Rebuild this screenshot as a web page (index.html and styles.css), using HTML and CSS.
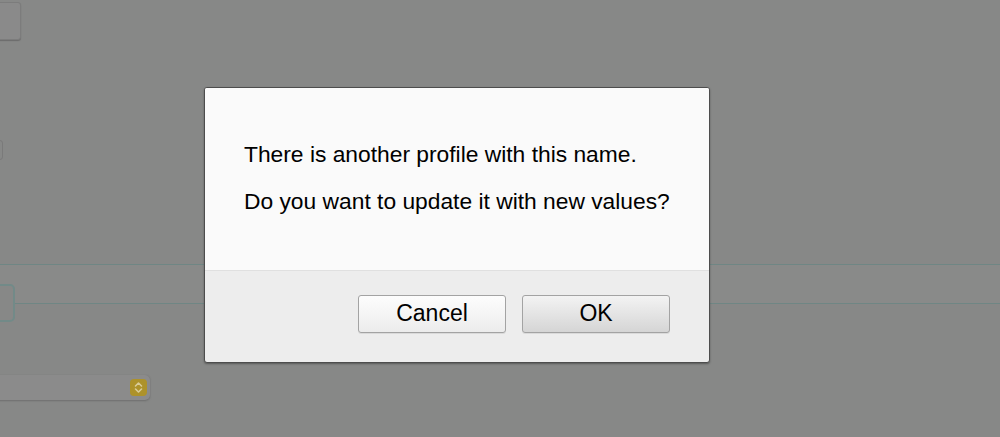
FILE: index.html
```html
<!DOCTYPE html>
<html lang="en">
<head>
<meta charset="utf-8">
<title>Profile</title>
<link rel="stylesheet" href="styles.css">
</head>
<body>
<div class="page">
  <div class="top-btn"></div>
  <div class="edge-mark"></div>
  <div class="band">
    <div class="field"></div>
  </div>
  <div class="select">
    <span class="stepper">
      <svg width="17" height="17" viewBox="0 0 17 17"><path d="M5.5 7 L8.5 4 L11.5 7 M5.5 10 L8.5 13 L11.5 10" fill="none" stroke="#d9cc98" stroke-width="1.6" stroke-linecap="round" stroke-linejoin="round"/></svg>
    </span>
  </div>
</div>

<div class="dialog">
  <div class="dialog-body">
    <p class="msg">There is another profile with this name.</p>
    <p class="msg">Do you want to update it with new values?</p>
  </div>
  <div class="dialog-actions">
    <button class="btn">Cancel</button>
    <button class="btn btn-ok">OK</button>
  </div>
</div>
</body>
</html>
```

FILE: styles.css
```css
html, body {
  margin: 0;
  padding: 0;
  background: #878887;
  width: 1000px;
  height: 437px;
  overflow: hidden;
  font-family: "Liberation Sans", Arial, Helvetica, sans-serif;
}

.page {
  display: flex;
  flex-direction: column;
  width: 1000px;
}

.top-btn {
  margin-top: 2px;
  margin-left: -10px;
  width: 29px;
  height: 36px;
  background: #8a8a8a;
  border: 1px solid #7c7c7c;
  border-radius: 3px;
  box-shadow: 0 1px 1px #6c6c6c;
}

.edge-mark {
  margin-top: 100px;
  margin-left: -4px;
  width: 5px;
  height: 18px;
  border: 1px solid #7a7a7a;
  border-radius: 3px;
}

.band {
  margin-top: 104px;
  height: 38px;
  border-top: 1px solid #6f8684;
  border-bottom: 1px solid #6f8684;
  background: #898a89;
}

.field {
  margin-top: 19px;
  margin-left: -10px;
  width: 21px;
  height: 34px;
  border: 2px solid #728a88;
  border-radius: 5px;
  background: #878887;
}

.select {
  margin-top: 71px;
  margin-left: -10px;
  width: 160px;
  height: 25px;
  background: #8b8b8b;
  border-radius: 5px;
  box-shadow: 0 1px 2px #6e6e6e, 0 0 1px #777777;
  display: flex;
  align-items: center;
  justify-content: flex-end;
}

.stepper {
  width: 17px;
  height: 17px;
  margin-right: 3px;
  border-radius: 4px;
  background: #ad922a;
  display: flex;
}

.dialog {
  position: absolute;
  left: 204px;
  top: 87px;
  width: 504px;
  border: 1px solid #4d4d4d;
  border-radius: 3px;
  box-shadow: 0 1px 2px rgba(0,0,0,0.35);
  overflow: hidden;
  background: #ededed;
}

.dialog-body {
  background: #fafafa;
  padding: 53px 0 56px 39px;
  border-bottom: 1px solid #e0e0e0;
  display: flex;
  flex-direction: column;
  gap: 21px;
}

.msg {
  margin: 0;
  font-size: 22.8px;
  line-height: 26px;
  color: #000;
  white-space: nowrap;
}

.dialog-actions {
  display: flex;
  justify-content: flex-end;
  gap: 16px;
  padding: 24px 39px 29px 0;
}

.btn {
  width: 148px;
  height: 38px;
  margin: 0;
  padding: 0 0 2px 0;
  font-family: "Liberation Sans", Arial, Helvetica, sans-serif;
  font-size: 23px;
  line-height: 34px;
  color: #000;
  border: 1px solid #a3a3a3;
  border-radius: 3px;
  background: linear-gradient(#fdfdfd, #ececec);
  box-shadow: 0 1px 0 rgba(0,0,0,0.08);
}

.btn-ok {
  background: linear-gradient(#f3f3f3, #d5d5d5);
}
```
